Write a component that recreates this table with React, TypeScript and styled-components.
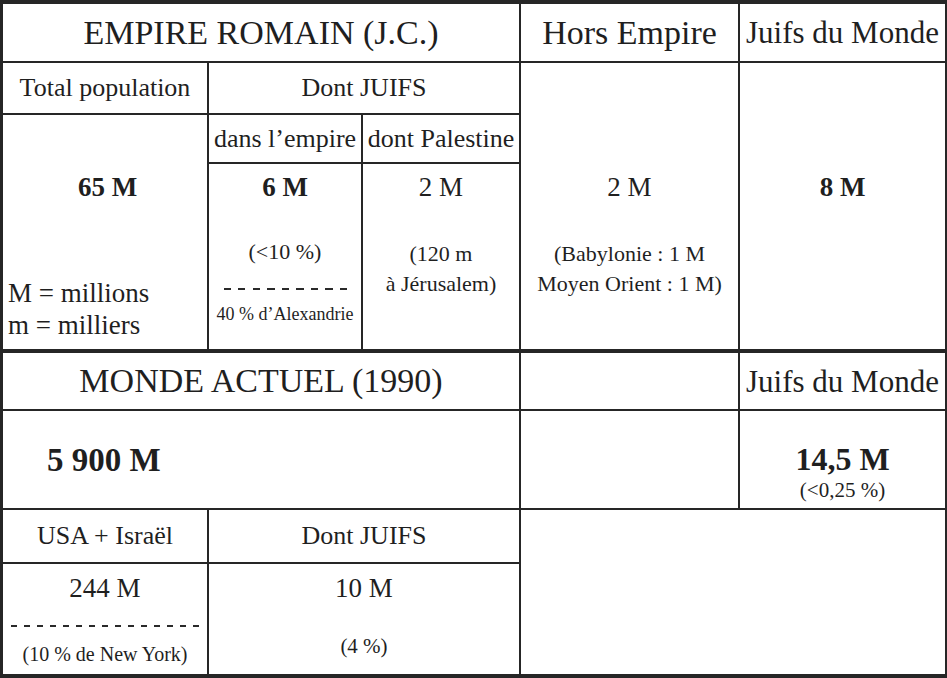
import styled, { createGlobalStyle } from 'styled-components';

const GlobalStyle = createGlobalStyle`
  html, body {
    margin: 0;
    padding: 0;
    background: #fff;
  }
  body {
    font-family: "Liberation Serif", "DejaVu Serif", serif;
    color: #1f1f1f;
  }
`;

const Frame = styled.div`
  width: 947px;
  height: 678px;
  box-sizing: border-box;
  background: #262626;
  padding: 4px 2px 4px 3px;
  display: flex;
  flex-direction: column;
  gap: 4px;
`;

const Section = styled.div<{ $rows: string }>`
  display: grid;
  grid-template-columns: 204px 152px 156px 217px 1fr;
  grid-template-rows: ${(p) => p.$rows};
  gap: 2px;
`;

const Cell = styled.div<{
  $col: string;
  $row: string;
  $pt?: number;
  $pb?: number;
  $pl?: number;
  $left?: boolean;
  $middle?: boolean;
}>`
  grid-column: ${(p) => p.$col};
  grid-row: ${(p) => p.$row};
  background: #fff;
  display: flex;
  flex-direction: column;
  align-items: ${(p) => (p.$left ? 'flex-start' : 'center')};
  justify-content: ${(p) => (p.$middle ? 'center' : 'flex-start')};
  padding: ${(p) => p.$pt ?? 0}px 0 ${(p) => p.$pb ?? 0}px ${(p) => p.$pl ?? 0}px;
  box-sizing: border-box;
  overflow: hidden;
  white-space: nowrap;
`;

const Title = styled.div<{ $size?: number }>`
  font-size: ${(p) => p.$size ?? 34}px;
  line-height: 1;
`;

const Label = styled.div`
  font-size: 26px;
  line-height: 1;
`;

const Figure = styled.div<{ $bold?: boolean; $size?: number; $centered?: boolean }>`
  align-self: ${(p) => (p.$centered ? 'center' : 'auto')};
  font-size: ${(p) => p.$size ?? 27}px;
  font-weight: ${(p) => (p.$bold ? 700 : 400)};
  line-height: 30px;
`;

const Note = styled.div<{ $mt?: number; $size?: number; $lh?: number }>`
  margin-top: ${(p) => p.$mt ?? 0}px;
  font-size: ${(p) => p.$size ?? 22}px;
  line-height: ${(p) => p.$lh ?? 30}px;
  text-align: center;
`;

const Small = styled.div<{ $mt?: number; $size?: number }>`
  margin-top: ${(p) => p.$mt ?? 0}px;
  font-size: ${(p) => p.$size ?? 18}px;
  line-height: 22px;
`;

const Legend = styled.div`
  margin-top: auto;
  font-size: 27px;
  line-height: 32px;
`;

const Dashes = styled.div<{ $count: number; $dash: number; $period: number; $mt: number }>`
  margin-top: ${(p) => p.$mt}px;
  width: ${(p) => (p.$count - 1) * p.$period + p.$dash}px;
  height: 1.5px;
  background: repeating-linear-gradient(
    to right,
    #2a2a2a 0,
    #2a2a2a ${(p) => p.$dash}px,
    transparent ${(p) => p.$dash}px,
    transparent ${(p) => p.$period}px
  );
`;

export default function App() {
  return (
    <>
      <GlobalStyle />
      <Frame>
        <Section $rows="57px 50px 47px 185px">
          <Cell $col="1 / 4" $row="1" $middle>
            <Title>EMPIRE ROMAIN (J.C.)</Title>
          </Cell>
          <Cell $col="4" $row="1" $middle>
            <Title>Hors Empire</Title>
          </Cell>
          <Cell $col="5" $row="1" $middle>
            <Title $size={31}>Juifs du Monde</Title>
          </Cell>

          <Cell $col="1" $row="2" $middle>
            <Label>Total population</Label>
          </Cell>
          <Cell $col="2 / 4" $row="2" $middle>
            <Label>Dont JUIFS</Label>
          </Cell>
          <Cell $col="4" $row="2 / 5" $pt={109}>
            <Figure>2 M</Figure>
            <Note $mt={37}>
              (Babylonie : 1 M
              <br />
              Moyen Orient : 1 M)
            </Note>
          </Cell>
          <Cell $col="5" $row="2 / 5" $pt={109}>
            <Figure $bold>8 M</Figure>
          </Cell>

          <Cell $col="1" $row="3 / 5" $pt={57} $pb={8} $pl={5} $left>
            <Figure $bold $centered>65 M</Figure>
            <Legend>
              M = millions
              <br />m = milliers
            </Legend>
          </Cell>
          <Cell $col="2" $row="3" $middle>
            <Label>dans l’empire</Label>
          </Cell>
          <Cell $col="3" $row="3" $middle>
            <Label>dont Palestine</Label>
          </Cell>

          <Cell $col="2" $row="4" $pt={8}>
            <Figure $bold>6 M</Figure>
            <Note $mt={35}>(&lt;10 %)</Note>
            <Dashes $count={9} $dash={7} $period={14.5} $mt={21} />
            <Small $mt={13}>40 % d’Alexandrie</Small>
          </Cell>
          <Cell $col="3" $row="4" $pt={8}>
            <Figure>2 M</Figure>
            <Note $mt={37}>
              (120 m
              <br />à Jérusalem)
            </Note>
          </Cell>
        </Section>

        <Section $rows="56px 97px 52px 110px">
          <Cell $col="1 / 4" $row="1" $middle>
            <Title>MONDE ACTUEL (1990)</Title>
          </Cell>
          <Cell $col="4" $row="1" />
          <Cell $col="5" $row="1" $middle>
            <Title $size={31}>Juifs du Monde</Title>
          </Cell>

          <Cell $col="1 / 4" $row="2" $middle $left $pl={44}>
            <Figure $bold $size={33}>5 900 M</Figure>
          </Cell>
          <Cell $col="4" $row="2" />
          <Cell $col="5" $row="2" $pt={33}>
            <Figure $bold $size={32}>14,5 M</Figure>
            <Note $mt={3} $size={21} $lh={26}>(&lt;0,25 %)</Note>
          </Cell>

          <Cell $col="1" $row="3" $middle>
            <Label>USA + Israël</Label>
          </Cell>
          <Cell $col="2 / 4" $row="3" $middle>
            <Label>Dont JUIFS</Label>
          </Cell>
          <Cell $col="4 / 6" $row="3 / 5" />

          <Cell $col="1" $row="4" $pt={9}>
            <Figure>244 M</Figure>
            <Dashes $count={15} $dash={6} $period={13} $mt={22} />
            <Small $mt={16} $size={20}>(10 % de New York)</Small>
          </Cell>
          <Cell $col="2 / 4" $row="4" $pt={9}>
            <Figure>10 M</Figure>
            <Note $mt={28} $size={21}>(4 %)</Note>
          </Cell>
        </Section>
      </Frame>
    </>
  );
}
